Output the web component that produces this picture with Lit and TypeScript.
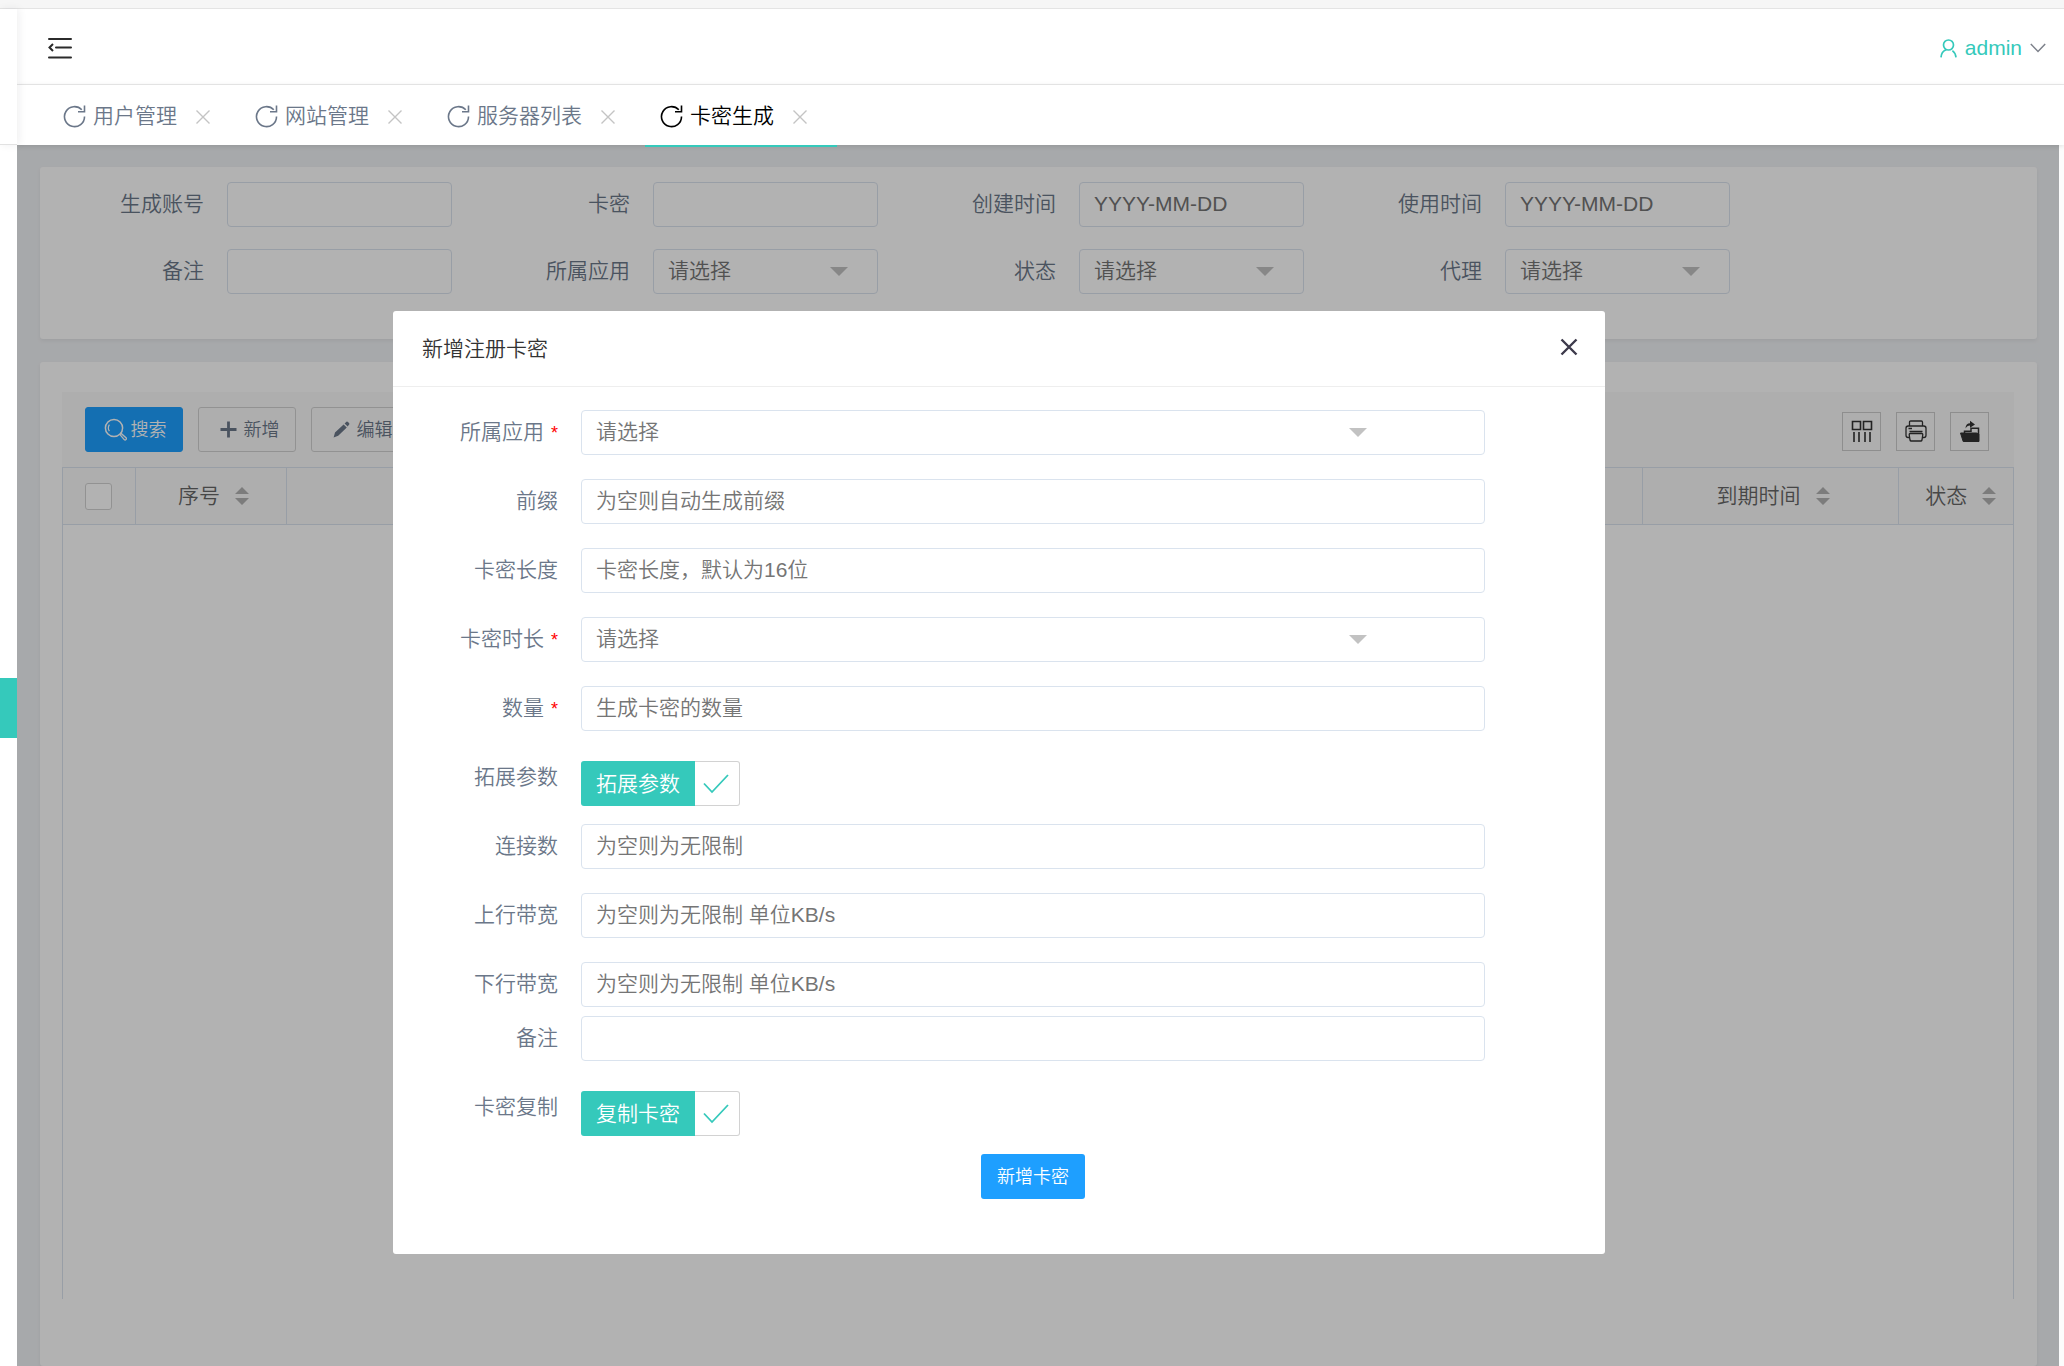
import { LitElement, html, svg, css, nothing } from "lit";
import { customElement, state } from "lit/decorators.js";

type Field = {
  id: string;
  label: string;
  kind: "text" | "select" | "check";
  hint?: string;
  required?: boolean;
  tight?: boolean;
};

const TABS = ["用户管理", "网站管理", "服务器列表", "卡密生成"];

const FILTERS: Field[] = [
  { id: "f-account", label: "生成账号", kind: "text" },
  { id: "f-card", label: "卡密", kind: "text" },
  { id: "f-created", label: "创建时间", kind: "text", hint: "YYYY-MM-DD" },
  { id: "f-used", label: "使用时间", kind: "text", hint: "YYYY-MM-DD" },
  { id: "f-note", label: "备注", kind: "text" },
  { id: "f-app", label: "所属应用", kind: "select", hint: "请选择" },
  { id: "f-state", label: "状态", kind: "select", hint: "请选择" },
  { id: "f-agent", label: "代理", kind: "select", hint: "请选择" },
];

const FORM: Field[] = [
  { id: "m-app", label: "所属应用", kind: "select", hint: "请选择", required: true },
  { id: "m-prefix", label: "前缀", kind: "text", hint: "为空则自动生成前缀" },
  { id: "m-length", label: "卡密长度", kind: "text", hint: "卡密长度，默认为16位" },
  { id: "m-duration", label: "卡密时长", kind: "select", hint: "请选择", required: true },
  { id: "m-count", label: "数量", kind: "text", hint: "生成卡密的数量", required: true },
  { id: "m-extra", label: "拓展参数", kind: "check", hint: "拓展参数" },
  { id: "m-conn", label: "连接数", kind: "text", hint: "为空则为无限制" },
  { id: "m-up", label: "上行带宽", kind: "text", hint: "为空则为无限制 单位KB/s" },
  { id: "m-down", label: "下行带宽", kind: "text", hint: "为空则为无限制 单位KB/s", tight: true },
  { id: "m-note", label: "备注", kind: "text" },
  { id: "m-copy", label: "卡密复制", kind: "check", hint: "复制卡密" },
];

const icon = (w: number, h: number, body: unknown) =>
  html`<svg width=${w} height=${h} viewBox="0 0 ${w} ${h}" fill="none" stroke="currentColor" aria-hidden="true">${body}</svg>`;

const foldIcon = icon(24, 22, svg`<path d="M1 2H23M8 10.5H23M1 20.5H23" stroke-width="2" stroke-linecap="round"/><path d="M5 7L1.5 10.5L5 14" stroke-width="2"/>`);
const refreshIcon = icon(23, 23, svg`<path d="M21.5 11.5A10 10 0 1 1 18.8 4.8" stroke-width="1.6"/><path d="M21.5 .5V6.8H15" stroke-width="1.6"/>`);
const smallClose = icon(14, 14, svg`<path d="M.5 .5L13.5 13.5M13.5 .5L.5 13.5" stroke-width="1.4"/>`);
const bigClose = icon(18, 18, svg`<path d="M1.5 1.5L16.5 16.5M16.5 1.5L1.5 16.5" stroke-width="2.4"/>`);
const userIcon = icon(17, 19, svg`<circle cx="8.5" cy="6" r="5" stroke-width="1.7"/><path d="M6.2 10.8C3 12 1.2 14.8 1 18.4M12.4 11.6C14.6 13.2 15.8 15.6 16 18.4" stroke-width="1.7"/>`);
const downIcon = icon(16, 10, svg`<path d="M.8 1L8 8.4L15.2 1" stroke-width="1.5"/>`);
const searchIcon = icon(23, 23, svg`<circle cx="10" cy="10" r="8.6" stroke-width="1.5"/><path d="M5.4 13.2A6 6 0 0 1 5.4 6.6" stroke-width="1.2"/><path d="M16 16.6L17.2 15.4L22 19.8A1.2 1.2 0 0 1 20.2 21.6Z" stroke-width="1.3"/>`);
const plusIcon = icon(17, 17, svg`<path d="M8.5 .5V16.5M.5 8.5H16.5" stroke-width="2.8"/>`);
const penIcon = icon(17, 17, svg`<path d="M.6 16.4L2 11.6L10.6 3.4L13.8 6.4L5.2 14.8ZM11.6 2.4L13.4 .8Q14.2 .2 15 1L16.2 2.2Q16.8 3 16 3.8L14.6 5.4Z" fill="currentColor" stroke="none"/>`);
const columnsIcon = icon(22, 22, svg`<path d="M1.5 1.5H9.5V9.5H1.5ZM12.5 1.5H20.5V9.5H12.5ZM3 12V22M8 12V22M14 12V22M19 12V22" stroke-width="1.6"/>`);
const printIcon = icon(22, 22, svg`<path d="M4.5 6V2.2Q4.5 1 5.7 1H16.3Q17.5 1 17.5 2.2V6M4.5 17.5H3.2Q1 17.5 1 15.3V8.2Q1 6 3.2 6H18.8Q21 6 21 8.2V15.3Q21 17.5 18.8 17.5H17.5M4.5 11.5H17.5M3.5 8.5H7M5.2 13.5H16.8Q17.8 13.5 17.8 14.5L17 20Q16.8 21 15.8 21H6.2Q5.2 21 5 20L4.2 14.5Q4.2 13.5 5.2 13.5Z" stroke-width="1.3"/>`);
const exportIcon = icon(22, 22, svg`<path d="M1.5 13H17.5L20 14V21.5H4.2Z" fill="currentColor" stroke-width="1"/><path d="M5.5 13V11.2H12V8.2H19.5V14" stroke-width="1.5"/><path d="M6.5 8.5C6.5 5 8.5 3.2 11 3.2V.8L16 4.4L11 7.8V5.6C9 5.6 7.6 6.6 6.5 8.5Z" fill="currentColor" stroke="none"/>`);
const tickIcon = icon(26, 20, svg`<path d="M1 9.5L9 18L25 1" stroke-width="1.8"/>`);
const arrowIcon = icon(18, 9, svg`<path d="M0 0H18L9 9Z" fill="#c2c2c2" stroke="none"/>`);
const sortIcon = icon(14, 18, svg`<path d="M0 7L7 0L14 7ZM0 11H14L7 18Z" fill="#b2b2b2" stroke="none"/>`);

@customElement("app-root")
export class AppRoot extends LitElement {
  @state() private active = 3;

  static styles = css`
    :host {
      display: block;
      font-family: "Liberation Sans", "Noto Sans CJK SC", sans-serif;
      font-size: 21px;
      font-weight: 350;
      line-height: 30px;
      color: #6b7789;
    }
    * { box-sizing: border-box; }
    svg { display: block; flex: none; }
    button, input, select { font: inherit; color: inherit; margin: 0; }
    button { display: flex; align-items: center; justify-content: center; padding: 0; border: 0; background: none; cursor: pointer; }

    .page { display: flex; flex-direction: column; height: 100vh; overflow: hidden; background: #fff; }
    .strip { flex: none; height: 9px; background: #f6f6f6; border-bottom: 1px solid #e4e4e4; }
    .body { flex: 1; display: flex; min-height: 0; }
    .side { position: relative; z-index: 3; flex: none; width: 17px; background: #fff; display: flex; flex-direction: column; }
    .brand { height: 136px; border-bottom: 1px solid #e2e2e2; box-shadow: 2px 0 8px rgba(29, 35, 41, 0.07); }
    .current { height: 60px; margin-top: 533px; background: #35c9bb; }
    .main { flex: 1; min-width: 0; display: flex; flex-direction: column; }

    .header { flex: none; display: flex; align-items: center; justify-content: space-between; height: 76px; padding: 3px 18px 0 31px; border-bottom: 1px solid #ebebeb; }
    .fold { color: #2b2b2b; }
    .user { gap: 8px; color: #35c9bb; }
    .user .down { color: #7c808a; }

    .tabs { flex: none; position: relative; z-index: 2; display: flex; height: 60px; padding-left: 31px; background: #fff; box-shadow: 0 1px 5px rgba(0, 0, 0, 0.12); }
    .tab { position: relative; display: flex; align-items: center; padding: 2px 30px 0 15px; }
    .tab .name { gap: 7px; }
    .tab .close { margin: 2px 0 0 19px; color: #c4c4c4; }
    .tab.on { color: #000; }
    .tab.on::after { content: ""; position: absolute; left: 0; right: 0; bottom: -2px; height: 2px; background: #35c9bb; }

    .stage { flex: 1; display: flex; min-height: 0; }
    .frame { position: relative; flex: 1; min-width: 0; overflow: hidden; display: flex; flex-direction: column; gap: 23px; padding: 22px 22px 0 23px; background: #f0f2f5; }
    .rail { flex: none; width: 5px; background: #fcfcfc; }
    .shade { position: absolute; inset: 0; background: rgba(0, 0, 0, 0.3); }

    .card { background: #fff; border-radius: 3px; box-shadow: 0 2px 4px rgba(0, 0, 0, 0.06); }
    .filters { flex: none; display: flex; flex-wrap: wrap; gap: 22px 14px; padding: 15px 0 45px; }
    .filter { display: flex; gap: 23px; }
    .filter .control { width: 225px; }

    .label { flex: none; width: 164px; padding: 7px 0; text-align: right; white-space: nowrap; }
    .star { color: #f00; margin-left: 7px; font-size: 18px; }
    .control { display: grid; align-items: center; }
    .control > * { grid-area: 1 / 1; }
    .box { width: 100%; min-width: 0; height: 45px; padding: 0 14px 1px; border: 1px solid #dae3ee; border-radius: 4px; background: #fff; color: #757575; appearance: none; outline: none; }
    .box::placeholder { color: #757575; opacity: 1; }
    .arrow { justify-self: end; margin-right: 30px; pointer-events: none; }

    .list { flex: 1; display: flex; flex-direction: column; padding: 30px 23px 67px 22px; }
    .toolbar { display: flex; align-items: center; gap: 15px; height: 75px; padding: 0 25px 0 23px; background: #fafafa; font-size: 18px; }
    .btn { width: 98px; height: 45px; gap: 4px; padding-left: 2px; border: 1px solid #d2d2d2; border-radius: 3px; }
    .btn.plain { gap: 7px; padding-left: 5px; }
    .btn.primary { border-color: #1e9fff; background: #1e9fff; color: #fff; }
    .tools { flex: 1; display: flex; justify-content: flex-end; gap: 15px; padding-top: 3px; }
    .tool { width: 39px; height: 39px; border: 1px solid #ccc; color: #333; }
    .tablebox { flex: 1; border: 1px solid #dae3ee; border-width: 0 1px; }
    .table { width: 100%; table-layout: fixed; border-collapse: collapse; color: #666; }
    .table th { height: 57px; padding: 0 0 0 6px; border: 1px solid #dae3ee; background: #fafafa; font-weight: inherit; }
    .table th:first-child { border-left: 0; padding: 0; }
    .table th:last-child { border-right: 0; padding-left: 10px; }
    .c-check { width: 72px; }
    .c-no { width: 151px; }
    .c-time { width: 256px; }
    .c-state { width: 115px; }
    .th { display: flex; align-items: center; justify-content: center; gap: 15px; }
    .all { display: block; width: 27px; height: 27px; margin: 0 auto; appearance: none; background: #fff; border: 1px solid #d2d2d2; border-radius: 3px; }

    .modal { position: absolute; inset: 166px 454px auto 376px; background: #fff; border-radius: 3px; }
    .mhead { display: flex; align-items: center; justify-content: space-between; height: 76px; padding: 0 27px 0 29px; border-bottom: 1px solid #eee; color: #333; }
    .mtitle { margin: 0; font: inherit; }
    .mclose { color: #3d3a4b; padding-bottom: 4px; }
    .mform { display: flex; flex-direction: column; padding: 23px 120px 55px 0; }
    .row { display: flex; gap: 23px; margin-bottom: 24px; }
    .row.tight { margin-bottom: 9px; }
    .row.last { margin-bottom: 0; }
    .row .label { width: 165px; }
    .row .control { flex: 1; }
    .row .arrow { margin-right: 118px; }
    .check { display: flex; height: 45px; margin: 6px 0 -6px; color: #fff; cursor: pointer; }
    .check .text { width: 114px; padding: 8px 0 7px; text-align: center; background: #35c9bb; border-radius: 3px 0 0 3px; }
    .check .mark { display: grid; place-items: center; color: #35c9bb; }
    .check .mark > * { grid-area: 1 / 1; }
    .check .mark svg { margin-right: 3px; }
    .check .tick { width: 45px; height: 45px; appearance: none; border: 1px solid #d2d2d2; border-left: 0; border-radius: 0 3px 3px 0; }
    .check svg { pointer-events: none; }
    .actions { display: flex; justify-content: center; padding: 24px 0 0 188px; font-size: 18px; }
    .submit { width: 104px; height: 45px; border-radius: 3px; background: #1e9fff; color: #fff; }
  `;

  private control(f: Field) {
    if (f.kind === "check") {
      return html`<label class="check">
        <span class="text">${f.hint}</span>
        <span class="mark"><input class="tick" id=${f.id} type="checkbox" checked />${tickIcon}</span>
      </label>`;
    }
    return html`<div class="control">
      ${f.kind === "select"
        ? html`<select class="box" id=${f.id}><option>${f.hint}</option></select><span class="arrow">${arrowIcon}</span>`
        : html`<input class="box" id=${f.id} type="text" placeholder=${f.hint ?? nothing} />`}
    </div>`;
  }

  private label(f: Field) {
    return html`<label class="label" for=${f.id}>${f.label}${f.required ? html`<span class="star">*</span>` : nothing}</label>`;
  }

  render() {
    return html`<div class="page">
      <div class="strip"></div>
      <div class="body">
        <aside class="side"><div class="brand"></div><div class="current"></div></aside>
        <div class="main">
          <header class="header">
            <button class="fold" aria-label="折叠菜单">${foldIcon}</button>
            <button class="user">${userIcon}<span>admin</span><span class="down">${downIcon}</span></button>
          </header>
          <nav class="tabs">
            ${TABS.map((t, i) => html`<div class="tab ${i === this.active ? "on" : ""}">
              <button class="name" @click=${() => (this.active = i)}>${refreshIcon}<span>${t}</span></button>
              <button class="close" aria-label="关闭${t}">${smallClose}</button>
            </div>`)}
          </nav>
          <div class="stage">
            <main class="frame">
              <form class="card filters">
                ${FILTERS.map((f) => html`<div class="filter">${this.label(f)}${this.control(f)}</div>`)}
              </form>
              <section class="card list">
                <div class="toolbar">
                  <button class="btn primary">${searchIcon}<span>搜索</span></button>
                  <button class="btn plain">${plusIcon}<span>新增</span></button>
                  <button class="btn plain">${penIcon}<span>编辑</span></button>
                  <div class="tools">
                    <button class="tool" aria-label="筛选列">${columnsIcon}</button>
                    <button class="tool" aria-label="打印">${printIcon}</button>
                    <button class="tool" aria-label="导出">${exportIcon}</button>
                  </div>
                </div>
                <div class="tablebox">
                  <table class="table">
                    <thead><tr>
                      <th class="c-check"><input class="all" type="checkbox" aria-label="全选" /></th>
                      <th class="c-no"><div class="th">序号${sortIcon}</div></th>
                      <th></th>
                      <th class="c-time"><div class="th">到期时间${sortIcon}</div></th>
                      <th class="c-state"><div class="th">状态${sortIcon}</div></th>
                    </tr></thead>
                  </table>
                </div>
              </section>
              <div class="shade"></div>
              <div class="modal" role="dialog" aria-labelledby="modal-title">
                <div class="mhead">
                  <h2 class="mtitle" id="modal-title">新增注册卡密</h2>
                  <button class="mclose" aria-label="关闭">${bigClose}</button>
                </div>
                <form class="mform">
                  ${FORM.map((f, i) => html`<div class="row ${f.tight ? "tight" : ""} ${i === FORM.length - 1 ? "last" : ""}">
                    ${this.label(f)}${this.control(f)}
                  </div>`)}
                  <div class="actions"><button class="submit" type="button">新增卡密</button></div>
                </form>
              </div>
            </main>
            <div class="rail"></div>
          </div>
        </div>
      </div>
    </div>`;
  }
}
